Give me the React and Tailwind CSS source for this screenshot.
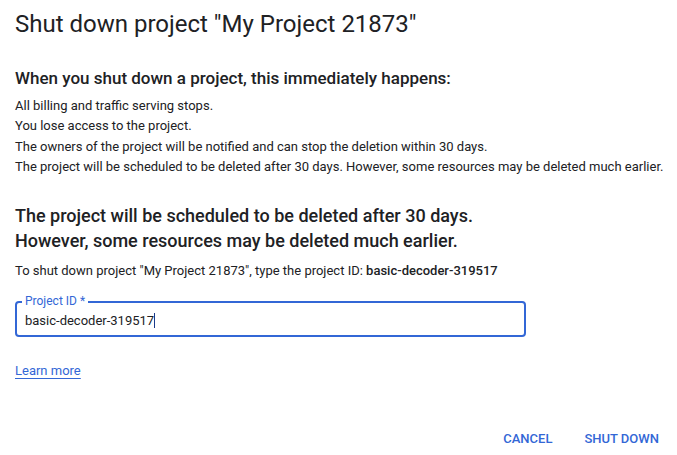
export default function App() {
  return (
    <div className="w-[677px] h-[455px] bg-white text-[#202124] overflow-hidden" style={{ fontFamily: 'Roboto, "Liberation Sans", sans-serif' }}>
      <div className="pl-[15px] pr-[18px]">
        <h1 className="pt-[8px] text-[24px] leading-[32px] font-normal text-[#202124]">Shut down project "My Project 21873"</h1>
        <h2 className="mt-[26px] text-[17px] leading-[24px] font-medium">When you shut down a project, this immediately happens:</h2>
        <div className="mt-[6px] text-[13px] leading-[20.3px] whitespace-nowrap">
          <p>All billing and traffic serving stops.</p>
          <p>You lose access to the project.</p>
          <p>The owners of the project will be notified and can stop the deletion within 30 days.</p>
          <p>The project will be scheduled to be deleted after 30 days. However, some resources may be deleted much earlier.</p>
        </div>
        <h2 className="mt-[26px] text-[18px] leading-[25px] font-medium">
          The project will be scheduled to be deleted after 30 days.<br />
          However, some resources may be deleted much earlier.
        </h2>
        <p className="mt-[8px] text-[13px] leading-[20px]">
          To shut down project "My Project 21873", type the project ID: <span className="font-medium">basic-decoder-319517</span>
        </p>
        <div className="relative mt-[20px] w-[511px] h-[36px] border-2 border-[#3367d6] rounded-[4px] flex items-center pl-[8px]">
          <span className="absolute left-[5px] top-[-10px] bg-white px-[3px] text-[12px] leading-[16px] text-[#3367d6]">Project ID *</span>
          <span className="text-[13px] leading-[18px] pt-[3px]">basic-decoder-319517</span>
          <span className="inline-block w-px h-[15px] bg-[#1a3a8a] mt-[3px]"></span>
        </div>
        <div className="mt-[21px]">
          <a className="text-[13px] leading-[18px] text-[#3367d6] underline underline-offset-[3px]">Learn more</a>
        </div>
        <div className="mt-[47px] flex justify-end gap-[32px]">
          <span className="text-[13px] font-medium text-[#3367d6]">CANCEL</span>
          <span className="text-[13px] font-medium text-[#3367d6]">SHUT DOWN</span>
        </div>
      </div>
    </div>
  );
}
